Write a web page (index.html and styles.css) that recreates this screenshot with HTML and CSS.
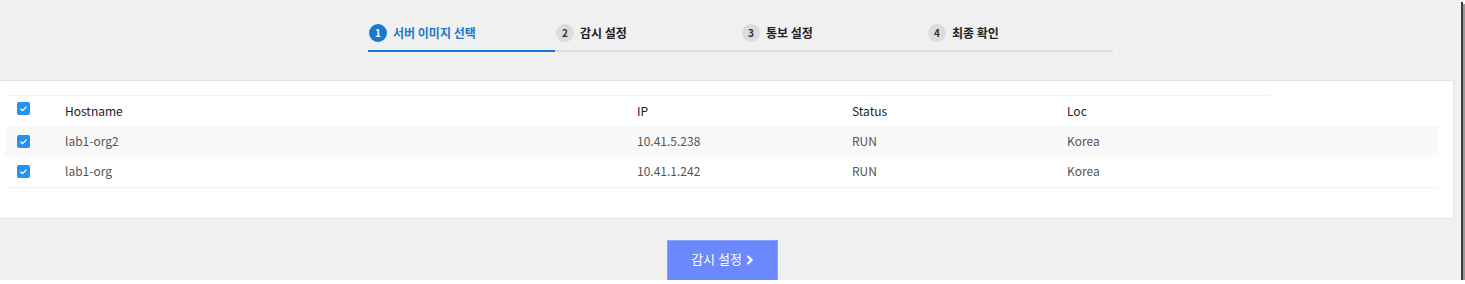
FILE: index.html
```html
<!DOCTYPE html>
<html>
<head>
    <title>서버 이미지 선택</title>
    <link rel="stylesheet" href="styles.css">
</head>
<body>
    <div class="shot">
        <div class="steps">
            <div class="step active"><span class="num">1</span>서버 이미지 선택</div>
            <div class="step"><span class="num">2</span>감시 설정</div>
            <div class="step"><span class="num">3</span>통보 설정</div>
            <div class="step"><span class="num">4</span>최종 확인</div>
        </div>

        <div class="panel">
            <div class="head-line"></div>
            <div class="row head">
                <span class="check"></span>
                <span>Hostname</span>
                <span>IP</span>
                <span>Status</span>
                <span>Loc</span>
            </div>
            <div class="row odd">
                <span class="check"></span>
                <span>lab1-org2</span>
                <span>10.41.5.238</span>
                <span>RUN</span>
                <span>Korea</span>
            </div>
            <div class="row">
                <span class="check"></span>
                <span>lab1-org</span>
                <span>10.41.1.242</span>
                <span>RUN</span>
                <span>Korea</span>
            </div>
        </div>

        <div class="actions">
            <button class="next">감시 설정
                <svg class="chev" viewBox="0 0 8 10" width="8" height="10"><path d="M1.5 1l4 4-4 4" fill="none" stroke="#fff" stroke-width="2.2"/></svg>
            </button>
        </div>
    </div>
</body>
</html>
```

FILE: styles.css
```css
body {
    margin: 0;
    background: #fff;
    font-family: "Noto Sans CJK KR", "Noto Sans", sans-serif;
}

.shot {
    width: 1461px;
    height: 280px;
    overflow: hidden;
    background: #f0f0f0;
    box-shadow: 2px 2px 0 #3c3c3c, 4px 4px 0 #9a9a9a;
}

/* steps */
.steps {
    display: flex;
    width: 745px;
    margin-left: 368px;
    padding-top: 24px;
    border-bottom: 2px solid #dcdcdc;
}

.step {
    width: 186px;
    height: 26px;
    display: flex;
    align-items: flex-start;
    font-size: 12px;
    font-weight: bold;
    color: #222;
    line-height: 18px;
    margin-bottom: -2px;
    border-bottom: 2px solid transparent;
}

.step .num {
    width: 18px;
    height: 18px;
    border-radius: 50%;
    background: #dcdcdc;
    color: #333;
    font-size: 10px;
    text-align: center;
    line-height: 18px;
    margin: 0 6px 0 1px;
}

.step.active {
    color: #1a78d4;
    border-bottom-color: #1a78d4;
    width: 187px;
}

.step.active .num {
    background: #1a78d4;
    color: #fff;
}

/* table panel */
.panel {
    width: 1454px;
    margin-top: 28px;
    height: 139px;
    background: #fff;
    border: 1px solid #e2e2e2;
    border-left: none;
    padding: 14px 0 0 5px;
    box-sizing: border-box;
}

.head-line {
    width: 1265px;
    height: 1px;
    background: #f3f3f3;
}

.row {
    display: grid;
    grid-template-columns: 60px 572px 215px 215px 1fr;
    align-items: center;
    width: 1434px;
    height: 31px;
    box-sizing: border-box;
    padding-bottom: 3px;
    font-size: 12px;
    color: #555;
}

.row.head {
    color: #222;
    height: 30px;
    padding-bottom: 1px;
}

.row.odd {
    background: #f9f9f9;
}

.row:last-child {
    border-bottom: 1px solid #f3f3f3;
}

.check {
    width: 13px;
    height: 13px;
    margin-left: 12px;
    margin-top: 2px;
    border-radius: 2px;
    background: #2393ef url("data:image/svg+xml,%3Csvg xmlns='http://www.w3.org/2000/svg' viewBox='0 0 13 13'%3E%3Cpath d='M3.5 6.8l2 1.8 4-4' fill='none' stroke='white' stroke-width='1.3'/%3E%3C/svg%3E") no-repeat;
}

.row.head .check {
    margin-top: -5px;
}

/* button */
.actions {
    padding: 21px 0 0 667px;
}

.next {
    width: 111px;
    height: 44px;
    border: 1px solid #8aa2ff;
    background: #6b89fd;
    color: #fff;
    font-family: "Noto Sans CJK KR", sans-serif;
    font-size: 13px;
    padding: 0 0 8px;
}

.chev {
    margin-left: 1px;
    vertical-align: -1px;
}
```
